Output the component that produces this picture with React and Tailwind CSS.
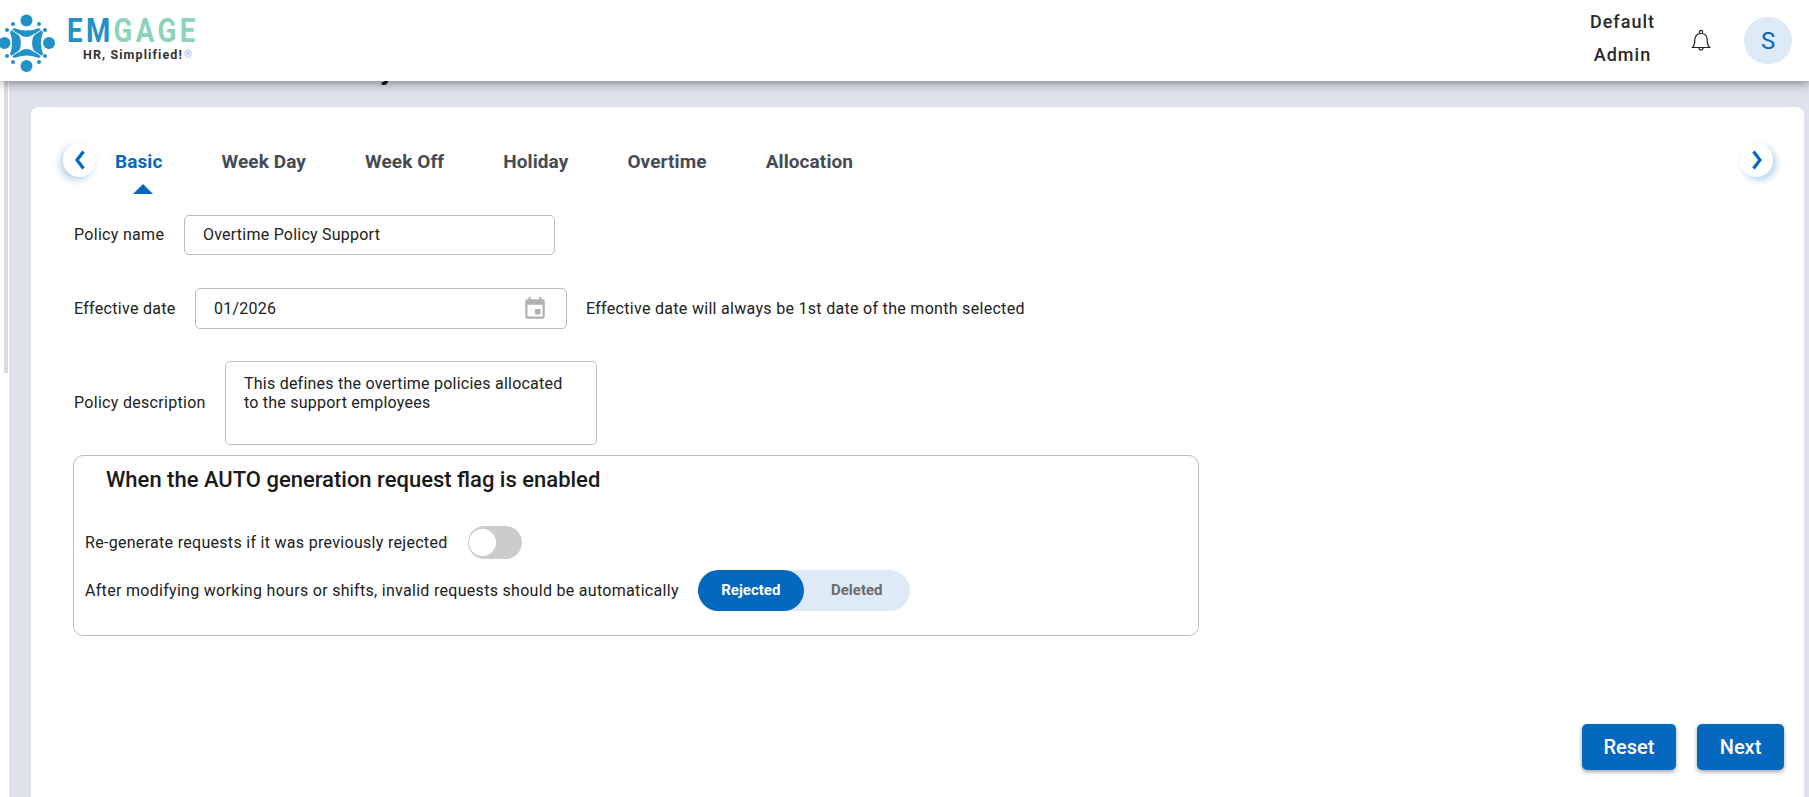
import React from "react";

function Logo() {
  const dots = [[13,19],[39,19],[45,25],[7,25],[7,51],[13,57],[39,57],[45,51]];
  return (
    <svg width="56" height="72" viewBox="0 0 56 72" className="shrink-0">
      <g fill="#2291c8">
        <circle cx="26.5" cy="15.5" r="6" />
        <circle cx="26.5" cy="61" r="6" />
        <circle cx="4.5" cy="38" r="6" />
        <circle cx="49" cy="38" r="6" />
        {dots.map(([x, y], i) => <circle key={i} cx={x} cy={y} r="2" />)}
        <path d="M14 23 Q27 28 39 23 L43 27 Q39 38 43 49 L39 53 Q27 48 14 53 L10 49 Q14 38 10 27 Z" />
      </g>
      <path d="M18 28 Q26.5 36 35 28 Q29 38 35 48 Q26.5 40 18 48 Q24 38 18 28 Z" fill="#fff" />
      <path d="M12 25 L19 30 M41 25 L34 30 M12 51 L19 46 M41 51 L34 46" stroke="#fff" strokeWidth="1" />
    </svg>
  );
}

function RoundArrow({ dir }) {
  const left = dir === "left";
  return (
    <div className={left
      ? "w-[33px] h-[34px] rounded-full bg-white flex items-center justify-center shrink-0 shadow-[-3px_3px_7px_rgba(5,104,191,0.3)]"
      : "w-[33px] h-[34px] rounded-full bg-white flex items-center justify-center shrink-0 shadow-[3px_3px_7px_rgba(5,104,191,0.3)]"}>
      <svg width="12" height="20" viewBox="0 0 12 20">
        <path d={left ? "M9.5 1.5 L3 10 L9.5 18.5" : "M2.5 1.5 L9 10 L2.5 18.5"} fill="none" stroke="#0568bf" strokeWidth="3.2" />
      </svg>
    </div>
  );
}

const tabs = ["Week Day", "Week Off", "Holiday", "Overtime", "Allocation"];

export default function App() {
  return (
    <div className="h-screen w-full overflow-hidden flex flex-col bg-[#dee2ec] font-['Roboto',sans-serif] text-[#212121]">
      <header className="relative z-10 h-[81px] shrink-0 bg-white flex items-center shadow-[0_2px_10px_rgba(0,0,0,0.45)]">
        <Logo />
        <div className="ml-[11px] flex flex-col items-start -mt-[2px]">
          <div className="text-[33px] leading-[26px] font-bold tracking-[4px] origin-left scale-x-[0.84]">
            <span className="text-[#2291c8]">EM</span>
            <span className="text-[#8dd3b9]">GAGE</span>
          </div>
          <div className="mt-[5px] ml-[16px] text-[12.5px] leading-[12px] font-bold tracking-[1.1px] text-[#333333] flex items-center">
            HR, Simplified!
            <span className="ml-[1px] text-[10px] text-[#7fb8e6] font-normal tracking-normal">®</span>
          </div>
        </div>
        <div className="ml-auto flex items-center">
          <div className="mb-[6px] text-center text-[18px] leading-[33px] font-medium tracking-[1px] text-[#2a2a2a]">
            <div>Default</div>
            <div>Admin</div>
          </div>
          <svg width="20" height="24" viewBox="0 0 20 24" className="ml-[36px]" fill="none" stroke="#222222" strokeWidth="1.2">
            <path d="M1.5 18.5 C3.5 16.5 3.8 14 3.8 11 C3.8 7 6.2 4.5 10 4.5 C13.8 4.5 16.2 7 16.2 11 C16.2 14 16.5 16.5 18.5 18.5 Z" />
            <path d="M8.5 4.5 V2.8 a1.5 1.5 0 0 1 3 0 V4.5" />
            <path d="M8 18.8 a2 2.2 0 0 0 4 0" />
          </svg>
          <div className="ml-[33px] mr-[17px] w-[48px] h-[47px] rounded-full bg-[#deeaf7] text-[#0568bf] text-[24px] flex items-center justify-center">S</div>
        </div>
      </header>

      <div className="flex-1 min-h-0 flex">
        <div className="w-[9px] shrink-0 bg-white pl-[4px]">
          <div className="w-[4px] h-[292px] bg-[#dcdcdc]" />
        </div>
        <main className="relative flex-1 min-w-0 pl-[22px] pr-[5px] pt-[26px]">
          <span className="absolute left-[371px] top-[-27px] text-[28px] leading-[32px] font-bold text-[#14172b]">y</span>
          <section className="relative h-full bg-white rounded-t-[8px] pl-[32px] pr-[31px] pt-[36px]">
            <div className="flex items-center">
              <RoundArrow dir="left" />
              <div className="ml-[19px] pt-[4px] flex items-center gap-[59px] text-[19px] leading-[30px] font-bold tracking-[0.1px] text-[#444b54]">
                <div className="relative text-[#0568bf]">
                  Basic
                  <div className="absolute left-[18px] top-[37px] w-0 h-0 border-l-[10px] border-r-[10px] border-b-[10px] border-l-transparent border-r-transparent border-b-[#0568bf]" />
                </div>
                {tabs.map((t) => <div key={t}>{t}</div>)}
              </div>
              <div className="ml-auto"><RoundArrow dir="right" /></div>
            </div>

            <div className="mt-[38px] flex items-center text-[16px] tracking-[0.3px]">
              <label className="pl-[11px] w-[121px] shrink-0">Policy name</label>
              <div className="w-[371px] h-[40px] border border-[#bdbdbd] rounded-[5px] pl-[18px] flex items-center tracking-[0.23px]">Overtime Policy Support</div>
            </div>

            <div className="mt-[33px] flex items-center text-[16px] tracking-[0.3px]">
              <label className="pl-[11px] w-[132px] shrink-0">Effective date</label>
              <div className="w-[372px] h-[41px] border border-[#bdbdbd] rounded-[5px] pl-[18px] pr-[18px] flex items-center justify-between tracking-[0.23px]">
                01/2026
                <svg width="26" height="26" viewBox="0 0 24 24" fill="#b0b0b0">
                  <path d="M17 12h-5v5h5v-5zM16 1v2H8V1H6v2H5c-1.11 0-1.99.9-1.99 2L3 19c0 1.1.89 2 2 2h14c1.1 0 2-.9 2-2V5c0-1.1-.9-2-2-2h-1V1h-2zm3 18H5V8h14v11z" />
                </svg>
              </div>
              <span className="ml-[19px]">Effective date will always be 1st date of the month selected</span>
            </div>

            <div className="mt-[32px] flex items-center text-[16px] tracking-[0.3px]">
              <label className="pl-[11px] w-[162px] shrink-0">Policy description</label>
              <div className="w-[372px] h-[84px] border border-[#bdbdbd] rounded-[5px] px-[18px] pt-[12px] leading-[19px] tracking-[0.23px]">
                This defines the overtime policies allocated to the support employees
              </div>
            </div>

            <div className="mt-[10px] ml-[10px] w-[1126px] h-[181px] border border-[#bdbdbd] rounded-[10px] pl-[11px] text-[16px] tracking-[0.3px]">
              <h2 className="ml-[21px] mt-[10px] text-[22px] leading-[28px] font-medium tracking-normal text-[#1a1a1a]">When the AUTO generation request flag is enabled</h2>
              <div className="mt-[32px] flex items-center">
                <span>Re-generate requests if it was previously rejected</span>
                <div className="ml-[20px] w-[54px] h-[33px] rounded-full bg-[#cccccc] flex items-center pl-[1px]">
                  <div className="w-[27px] h-[27px] rounded-full bg-white" />
                </div>
              </div>
              <div className="mt-[11px] flex items-center">
                <span>After modifying working hours or shifts, invalid requests should be automatically</span>
                <div className="ml-[19px] w-[212px] h-[41px] rounded-full bg-[#deeaf7] flex items-center text-[15px] font-bold">
                  <div className="w-[106px] h-full rounded-full bg-[#0568bf] text-white flex items-center justify-center tracking-normal">Rejected</div>
                  <div className="flex-1 text-center text-[#6b6b6b] tracking-normal">Deleted</div>
                </div>
              </div>
            </div>

            <div className="absolute right-[20px] top-[617px] flex gap-[21px] text-white text-[20px] font-medium">
              <button className="w-[94px] h-[46px] rounded-[5px] bg-[#0568bf] shadow-[0_2px_4px_rgba(0,0,0,0.35)]">Reset</button>
              <button className="w-[87px] h-[46px] rounded-[5px] bg-[#0568bf] shadow-[0_2px_4px_rgba(0,0,0,0.35)]">Next</button>
            </div>
          </section>
        </main>
      </div>
    </div>
  );
}
